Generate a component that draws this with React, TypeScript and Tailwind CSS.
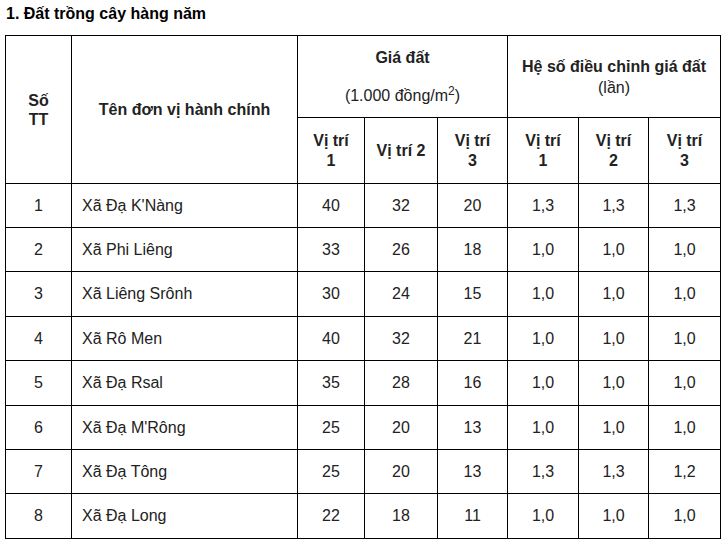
const rows = [
  { stt: 1, name: "Xã Đạ K'Nàng", g: [40, 32, 20], h: ["1,3", "1,3", "1,3"] },
  { stt: 2, name: "Xã Phi Liêng", g: [33, 26, 18], h: ["1,0", "1,0", "1,0"] },
  { stt: 3, name: "Xã Liêng Srônh", g: [30, 24, 15], h: ["1,0", "1,0", "1,0"] },
  { stt: 4, name: "Xã Rô Men", g: [40, 32, 21], h: ["1,0", "1,0", "1,0"] },
  { stt: 5, name: "Xã Đạ Rsal", g: [35, 28, 16], h: ["1,0", "1,0", "1,0"] },
  { stt: 6, name: "Xã Đạ M'Rông", g: [25, 20, 13], h: ["1,0", "1,0", "1,0"] },
  { stt: 7, name: "Xã Đạ Tông", g: [25, 20, 13], h: ["1,3", "1,3", "1,2"] },
  { stt: 8, name: "Xã Đạ Long", g: [22, 18, 11], h: ["1,0", "1,0", "1,0"] },
];

const rowHeights = [44, 44, 45, 44, 45, 44, 44, 45];

export default function App() {
  return (
    <div className="min-h-screen bg-white pl-[5px] pt-[5px] text-[16px] text-[#222] [font-family:'Liberation_Sans',Arial,sans-serif]">
      <h3 className="mb-[12px] pl-[1px] text-[16px] font-bold leading-[18px] text-black">
        1. Đất trồng cây hàng năm
      </h3>

      <table className="w-[715px] table-fixed border-collapse border border-black">
        <colgroup>
          <col className="w-[66px]" />
          <col className="w-[226px]" />
          <col className="w-[67px]" />
          <col className="w-[73px]" />
          <col className="w-[70px]" />
          <col className="w-[71px]" />
          <col className="w-[70px]" />
          <col className="w-[72px]" />
        </colgroup>
        <thead>
          <tr className="h-[82px]">
            <th rowSpan={2} className="border border-black text-center font-bold leading-[19px]">
              Số
              <br />
              TT
            </th>
            <th rowSpan={2} className="border border-black text-center font-bold leading-[19px]">
              Tên đơn vị hành chính
            </th>
            <th colSpan={3} className="border border-black text-center leading-[18px]">
              <div className="font-bold">Giá đất</div>
              <div className="mt-[20px] font-normal">
                (1.000 đồng/m<sup className="text-[12px]">2</sup>)
              </div>
            </th>
            <th colSpan={3} className="border border-black text-center leading-[21px]">
              <div className="font-bold">Hệ số điều chỉnh giá đất</div>
              <div className="font-normal">(lần)</div>
            </th>
          </tr>
          <tr className="h-[66px]">
            <th className="border border-black px-1 text-center font-bold leading-[20px]">
              Vị trí
              <br />1
            </th>
            <th className="border border-black text-center font-bold leading-[20px]">Vị trí 2</th>
            <th className="border border-black px-1 text-center font-bold leading-[20px]">
              Vị trí
              <br />3
            </th>
            <th className="border border-black px-1 text-center font-bold leading-[20px]">
              Vị trí
              <br />1
            </th>
            <th className="border border-black px-1 text-center font-bold leading-[20px]">
              Vị trí
              <br />2
            </th>
            <th className="border border-black px-1 text-center font-bold leading-[20px]">
              Vị trí
              <br />3
            </th>
          </tr>
        </thead>
        <tbody>
          {rows.map((r, i) => (
            <tr key={r.stt} style={{ height: rowHeights[i] }}>
              <td className="border border-black text-center">{r.stt}</td>
              <td className="border border-black pl-[10px] text-left">{r.name}</td>
              {r.g.map((v, j) => (
                <td key={"g" + j} className="border border-black text-center">
                  {v}
                </td>
              ))}
              {r.h.map((v, j) => (
                <td key={"h" + j} className="border border-black text-center">
                  {v}
                </td>
              ))}
            </tr>
          ))}
        </tbody>
      </table>
    </div>
  );
}
